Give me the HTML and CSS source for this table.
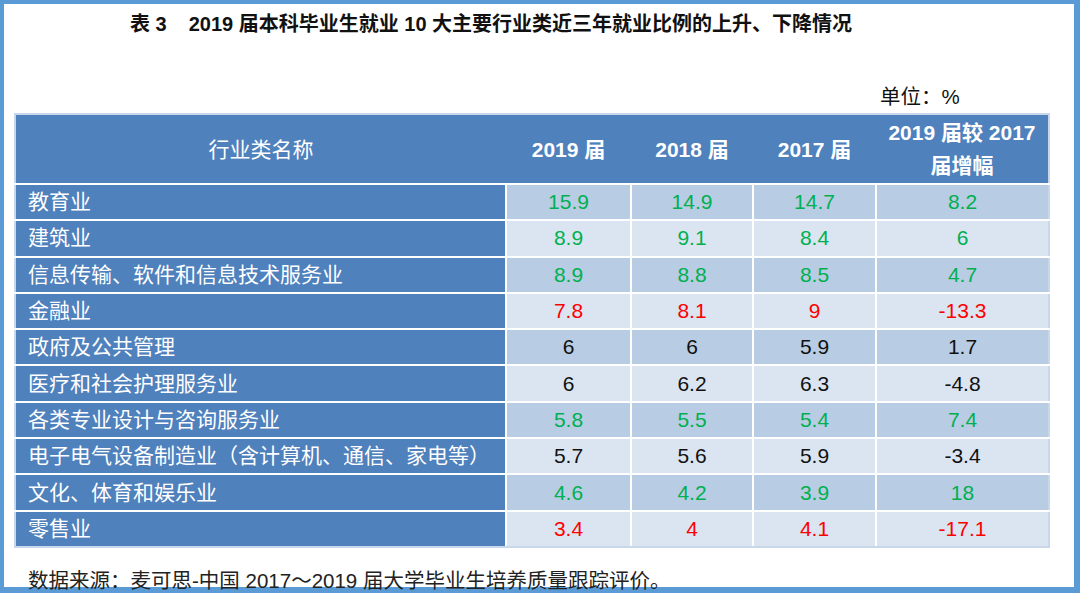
FILE: index.html
```html
<!DOCTYPE html>
<html lang="zh">
<head>
<meta charset="utf-8">
<title>表3</title>
<link rel="stylesheet" href="styles.css">
</head>
<body>
<div class="frame">
  <h1 class="title">表 3<span class="gap"></span>2019 届本科毕业生就业 10 大主要行业类近三年就业比例的上升、下降情况</h1>
  <div class="unit">单位<span class="colon">：</span>%</div>
  <table class="data">
    <colgroup>
      <col class="c-name"><col class="c-y"><col class="c-y2"><col class="c-y3"><col class="c-inc">
    </colgroup>
    <thead>
      <tr>
        <th class="h-name">行业类名称</th>
        <th>2019 届</th>
        <th>2018 届</th>
        <th>2017 届</th>
        <th>2019 届较 2017<br>届增幅</th>
      </tr>
    </thead>
    <tbody>
      <tr class="odd up"><td class="name">教育业</td><td>15.9</td><td>14.9</td><td>14.7</td><td>8.2</td></tr>
      <tr class="even up"><td class="name">建筑业</td><td>8.9</td><td>9.1</td><td>8.4</td><td>6</td></tr>
      <tr class="odd up"><td class="name">信息传输、软件和信息技术服务业</td><td>8.9</td><td>8.8</td><td>8.5</td><td>4.7</td></tr>
      <tr class="even down"><td class="name">金融业</td><td>7.8</td><td>8.1</td><td>9</td><td>-13.3</td></tr>
      <tr class="odd flat"><td class="name">政府及公共管理</td><td>6</td><td>6</td><td>5.9</td><td>1.7</td></tr>
      <tr class="even flat"><td class="name">医疗和社会护理服务业</td><td>6</td><td>6.2</td><td>6.3</td><td>-4.8</td></tr>
      <tr class="odd up"><td class="name">各类专业设计与咨询服务业</td><td>5.8</td><td>5.5</td><td>5.4</td><td>7.4</td></tr>
      <tr class="even flat"><td class="name">电子电气设备制造业（含计算机、通信、家电等）</td><td>5.7</td><td>5.6</td><td>5.9</td><td>-3.4</td></tr>
      <tr class="odd up"><td class="name">文化、体育和娱乐业</td><td>4.6</td><td>4.2</td><td>3.9</td><td>18</td></tr>
      <tr class="even down"><td class="name">零售业</td><td>3.4</td><td>4</td><td>4.1</td><td>-17.1</td></tr>
    </tbody>
  </table>
  <p class="source">数据来源<span class="colon">：</span>麦可思-中国 2017～2019 届大学毕业生培养质量跟踪评价。</p>
</div>
</body>
</html>
```
FILE: styles.css
```css
* { box-sizing: border-box; }
html, body { margin: 0; padding: 0; background: #ffffff; }
body {
  width: 1080px;
  height: 593px;
  overflow: hidden;
  font-family: "Liberation Sans", Arial, "Noto Sans CJK SC", sans-serif;
}
.frame {
  width: 1080px;
  height: 593px;
  border-style: solid;
  border-color: #5b9bd5;
  border-width: 4px 6px 6px 4px;
  padding: 0 0 0 10px;
  background: #fff;
}
.title {
  margin: 0;
  padding: 2px 0 0 116px;
  height: 79px;
  line-height: 36px;
  font-size: 20px;
  font-weight: bold;
  color: #111;
  white-space: nowrap;
}
.gap { display: inline-block; width: 22px; }
.colon { font-family: "Noto Sans CJK TC", sans-serif; }
.unit {
  height: 24px;
  line-height: 24px;
  font-size: 20.5px;
  color: #111;
  padding-left: 866px;
  white-space: nowrap;
}
.data {
  margin-top: 6px;
  width: 1034px;
  border-collapse: collapse;
  table-layout: fixed;
  font-size: 21px;
}
.c-name { width: 491px; }
.c-y { width: 125px; }
.c-y2 { width: 122px; }
.c-y3 { width: 123px; }
.c-inc { width: 173px; }
.data th {
  background: #4f81bd;
  color: #fff;
  font-weight: bold;
  height: 70px;
  line-height: 33px;
  padding: 0;
  text-align: center;
  border: 2px solid #c9d7ea;
  border-bottom-color: #ffffff;
}
.data th + th { border-left: none; border-right: none; }
.data th:last-child { border-right: 2px solid #c9d7ea; }
.data th.h-name { font-weight: normal; border-right: none; }
.data td {
  height: 36.3px;
  padding: 0;
  text-align: center;
  border: 2px solid #ffffff;
  white-space: nowrap;
  line-height: 32px;
}
.data td.name {
  background: #4f81bd;
  color: #fff;
  text-align: left;
  padding-left: 12px;
  font-size: 21px;
  border-left: 2px solid #c9d7ea;
}
.data tr:last-child td { border-bottom: 2px solid #c9d7ea; }
.data td:last-child { border-right: 2px solid #c9d7ea; }
.odd td { background: #b8cce4; }
.even td { background: #dbe5f1; }
.up td { color: #00b050; }
.down td { color: #ff0000; }
.flat td { color: #111; }
.source {
  margin: 19px 0 0 14px;
  line-height: 24px;
  font-size: 20.5px;
  color: #222;
  white-space: nowrap;
}
```
